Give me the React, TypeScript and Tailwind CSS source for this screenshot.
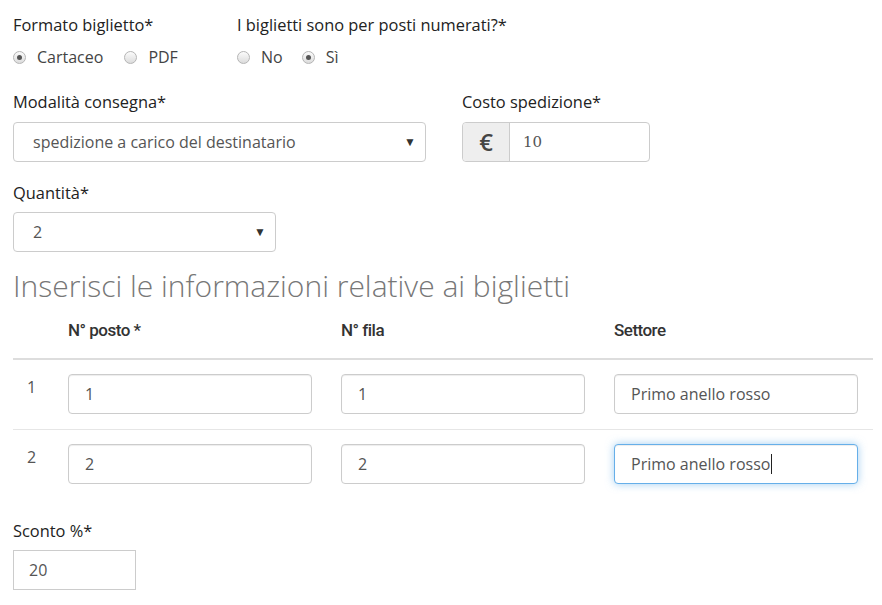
import React from "react";

const Radio = ({ checked, label }: { checked?: boolean; label: string }) => (
  <div className="flex items-center">
    <span className="relative inline-flex h-[13px] w-[13px] items-center justify-center rounded-full border border-[#b5b5b5] bg-[linear-gradient(#fbfbfb,#dcdcdc)]">
      {checked && <span className="h-[5px] w-[5px] rounded-full bg-[#555]" />}
    </span>
    <span className="ml-[11px] text-[16px] text-[#444]">{label}</span>
  </div>
);

const Label = ({ children }: { children: React.ReactNode }) => (
  <div className="text-[16.4px] leading-[20px] text-[#222]">{children}</div>
);

const Select = ({ value, width }: { value: string; width: string }) => (
  <div
    className={`flex h-[40px] items-center justify-between rounded-[4px] border border-[#ccc] bg-white pl-[19px] pr-[9px] text-[16px] text-[#555] ${width}`}
  >
    <span>{value}</span>
    <span className="text-[12px] text-[#333]">▼</span>
  </div>
);

const Field = ({ value, focused, caret }: { value: string; focused?: boolean; caret?: boolean }) => (
  <div
    className={`flex h-[40px] w-[244px] items-center rounded-[4px] border bg-white pl-[16px] text-[16px] text-[#555] ${
      focused
        ? "border-[#66afe9] shadow-[0_0_8px_rgba(102,175,233,0.6),inset_0_1px_1px_rgba(0,0,0,0.075)]"
        : "border-[#ccc] shadow-[inset_0_1px_1px_rgba(0,0,0,0.075)]"
    }`}
  >
    <span>{value}</span>
    {caret && <span className="ml-[1px] h-[20px] w-[1px] bg-[#222]" />}
  </div>
);

const rows = [
  { n: "1", posto: "1", fila: "1", settore: "Primo anello rosso" },
  { n: "2", posto: "2", fila: "2", settore: "Primo anello rosso", focused: true },
];

export default function App() {
  return (
    <div className="min-h-[605px] w-[882px] bg-white pl-[13px] pt-[15px] font-['Open_Sans',sans-serif] text-[#333]">
      <div className="flex">
        <div className="w-[224px]">
          <Label>Formato biglietto*</Label>
          <div className="mt-[10px] flex gap-[21px]">
            <Radio checked label="Cartaceo" />
            <Radio label="PDF" />
          </div>
        </div>
        <div>
          <Label>I biglietti sono per posti numerati?*</Label>
          <div className="mt-[10px] flex gap-[19px]">
            <Radio label="No" />
            <Radio checked label="Sì" />
          </div>
        </div>
      </div>

      <div className="mt-[23px] flex">
        <div className="w-[449px]">
          <Label>Modalità consegna*</Label>
          <div className="mt-[10px]">
            <Select value="spedizione a carico del destinatario" width="w-[413px]" />
          </div>
        </div>
        <div>
          <Label>Costo spedizione*</Label>
          <div className="mt-[10px] flex h-[40px] w-[188px] rounded-[4px] border border-[#ccc]">
            <div className="flex w-[47px] items-center justify-center rounded-l-[4px] border-r border-[#ccc] bg-[#eee] text-[24px] font-semibold text-[#444]">
              €
            </div>
            <div className="flex flex-1 items-center pl-[13px] font-['DejaVu_Serif',serif] text-[15px] text-[#555]">
              10
            </div>
          </div>
        </div>
      </div>

      <div className="mt-[21px]">
        <Label>Quantità*</Label>
        <div className="mt-[9px]">
          <Select value="2" width="w-[263px]" />
        </div>
      </div>

      <h2 className="mt-[16px] text-[30px] font-light leading-[36px] text-[#777]">
        Inserisci le informazioni relative ai biglietti
      </h2>

      <div className="mt-[8px] w-[860px]">
        <div className="grid grid-cols-[47px_273px_273px_1fr] border-b-2 border-[#ddd] pb-[18px] pt-[8px] font-['Roboto',sans-serif] text-[17px] font-medium leading-[20px] tracking-[-0.03em] text-[#333]">
          <div />
          <div className="pl-[8px]">N° posto *</div>
          <div className="pl-[8px]">N° fila</div>
          <div className="pl-[8px]">Settore</div>
        </div>
        {rows.map((r, i) => (
          <div
            key={r.n}
            className={`grid grid-cols-[47px_273px_273px_1fr] ${i === 0 ? "border-b border-[#e6e6e6] pb-[15px] pt-[14px]" : "pb-[14px] pt-[14px]"}`}
          >
            <div className="pl-[14px] pt-[1px] text-[16px] text-[#555]">{r.n}</div>
            <div className="pl-[8px]">
              <Field value={r.posto} />
            </div>
            <div className="pl-[8px]">
              <Field value={r.fila} />
            </div>
            <div className="pl-[8px]">
              <Field value={r.settore} focused={r.focused} caret={r.focused} />
            </div>
          </div>
        ))}
      </div>

      <div className="mt-[23px]">
        <Label>Sconto %*</Label>
        <div className="mt-[9px] flex h-[40px] w-[123px] items-center border border-[#ccc] pl-[15px] text-[16px] text-[#555]">
          20
        </div>
      </div>
    </div>
  );
}
